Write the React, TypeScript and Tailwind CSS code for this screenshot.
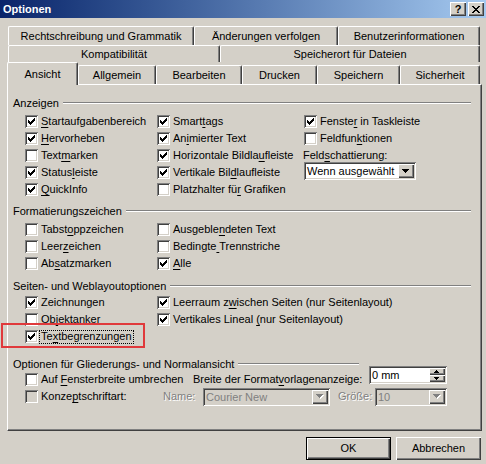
import React from "react";

const SUNKEN =
  "shadow-[inset_1px_1px_0_#808080,inset_-1px_-1px_0_#ffffff,inset_2px_2px_0_#404040,inset_-2px_-2px_0_#d4d0c8]";
const RAISED =
  "shadow-[inset_1px_1px_0_#ffffff,inset_-1px_-1px_0_#404040,inset_-2px_-2px_0_#808080]";
const DIS = "text-[#808080] [text-shadow:1px_1px_0_#ffffff]";

function M({ t }: { t: string }) {
  const i = t.indexOf("&");
  if (i < 0) return <>{t}</>;
  return (
    <>
      {t.slice(0, i)}
      <span className="underline decoration-1 underline-offset-[2px] whitespace-pre">{t[i + 1]}</span>
      {t.slice(i + 2)}
    </>
  );
}

const CHECK: number[][] = [
  [9, 3, 1],
  [8, 4, 2],
  [3, 5, 1],
  [7, 5, 3],
  [3, 6, 2],
  [6, 6, 3],
  [3, 7, 5],
  [4, 8, 3],
  [5, 9, 1],
];

function Box({ checked, disabled }: { checked?: boolean; disabled?: boolean }) {
  return (
    <div
      className={`relative w-[13px] h-[13px] shrink-0 ${disabled ? "bg-[#d4d0c8]" : "bg-white"} ${SUNKEN}`}
    >
      {checked && (
        <svg
          className="absolute left-0 top-0"
          width="13"
          height="13"
          viewBox="0 0 13 13"
          shapeRendering="crispEdges"
        >
          {CHECK.map(([x, y, w], i) => (
            <rect key={i} x={x} y={y} width={w} height={1} fill="#000" />
          ))}
        </svg>
      )}
    </div>
  );
}

function Chk({ l, c, d, f }: { l: string; c?: boolean; d?: boolean; f?: boolean }) {
  return (
    <div className="flex items-center h-[17px] whitespace-nowrap">
      <Box checked={c} disabled={d} />
      {f ? (
        <span className="ml-[1px] px-[1px] h-[14px] flex items-center border border-dotted border-black">
          <M t={l} />
        </span>
      ) : (
        <span className="ml-[3px]">
          <M t={l} />
        </span>
      )}
    </div>
  );
}

function GH({ t, mr }: { t: string; mr: string }) {
  return (
    <div className="flex items-center h-[16px] pl-[5px] whitespace-nowrap">
      <span>{t}</span>
      <div className={`flex-1 ml-[4px] h-[2px] border-t border-t-[#808080] border-b border-b-white ${mr}`} />
    </div>
  );
}

function Arrow({ up, disabled, small }: { up?: boolean; disabled?: boolean; small?: boolean }) {
  const rows = small ? [5, 3, 1] : [7, 5, 3, 1];
  const w = rows[0];
  const h = rows.length;
  const fill = disabled ? "#808080" : "#000";
  return (
    <svg width={w + 1} height={h + 1} viewBox={`0 0 ${w + 1} ${h + 1}`} shapeRendering="crispEdges">
      {rows.map((rw, i) => {
        const y = up ? h - 1 - i : i;
        const x = (w - rw) / 2;
        return (
          <g key={i}>
            {disabled && <rect x={x + 1} y={y + 1} width={rw} height={1} fill="#fff" />}
            <rect x={x} y={y} width={rw} height={1} fill={fill} />
          </g>
        );
      })}
    </svg>
  );
}

function Select({ w, text, disabled }: { w: string; text: string; disabled?: boolean }) {
  return (
    <div
      className={`${w} h-[18px] p-[2px] flex items-center ${SUNKEN} ${disabled ? "bg-[#d4d0c8]" : "bg-white"}`}
    >
      <span className={`flex-1 pl-[1px] truncate leading-[14px] ${disabled ? "text-[#808080]" : ""}`}>{text}</span>
      <div className={`w-[16px] h-[14px] bg-[#d4d0c8] ${RAISED} flex items-center justify-center`}>
        <Arrow disabled={disabled} />
      </div>
    </div>
  );
}

function Tab({ w, t, cls }: { w: string; t: string; cls?: string }) {
  return (
    <div
      className={`${w} ${cls ?? "h-full"} shrink-0 bg-[#d4d0c8] border-l border-t border-white border-r border-r-[#404040] shadow-[inset_-1px_0_0_#808080] rounded-tl-[2px] rounded-tr-[2px] flex items-center justify-center whitespace-nowrap leading-[14px]`}
    >
      {t}
    </div>
  );
}

const X_PIX: number[][] = [
  [0, 0, 2], [6, 0, 2],
  [1, 1, 2], [5, 1, 2],
  [2, 2, 4],
  [3, 3, 2],
  [2, 4, 4],
  [1, 5, 2], [5, 5, 2],
  [0, 6, 2], [6, 6, 2],
];

export default function App() {
  return (
    <div className="relative w-[486px] h-[464px] overflow-hidden bg-[#d4d0c8] text-[11px] leading-[17px] text-black font-['Liberation_Sans',Arial,sans-serif]">
      {/* Title bar */}
      <div className="h-[18px] flex items-center bg-linear-to-r from-[#0a246a] to-[#a6caf0] pl-[3px] pr-[2px]">
        <span className="text-white font-bold leading-[18px]">Optionen</span>
        <div className="ml-auto flex gap-[2px]">
          <div className={`w-[16px] h-[14px] bg-[#d4d0c8] ${RAISED} flex items-center justify-center font-bold text-[11px] leading-[14px]`}>
            ?
          </div>
          <div className={`w-[16px] h-[14px] bg-[#d4d0c8] ${RAISED} flex items-center justify-center`}>
            <svg width="8" height="7" viewBox="0 0 8 7" shapeRendering="crispEdges">
              {X_PIX.map(([x, y, w], i) => (
                <rect key={i} x={x} y={y} width={w} height={1} fill="#000" />
              ))}
            </svg>
          </div>
        </div>
      </div>

      {/* Tabs */}
      <div className="pt-[8px]">
        <div className="flex ml-[8px] h-[19px]">
          <Tab w="w-[186px]" t="Rechtschreibung und Grammatik" />
          <Tab w="w-[144px]" t="Änderungen verfolgen" />
          <Tab w="w-[142px]" t="Benutzerinformationen" />
        </div>
        <div className="flex ml-[8px] h-[17px]">
          <Tab w="w-[212px]" t="Kompatibilität" />
          <Tab w="w-[260px]" t="Speicherort für Dateien" />
        </div>
        <div className="flex ml-[7px] h-[22px] items-start">
          <Tab w="w-[71px]" t="Ansicht" cls="h-[23px] relative z-10" />
          <Tab w="w-[78px]" t="Allgemein" cls="h-[19px] mt-[3px]" />
          <Tab w="w-[86px]" t="Bearbeiten" cls="h-[19px] mt-[3px]" />
          <Tab w="w-[75px]" t="Drucken" cls="h-[19px] mt-[3px]" />
          <Tab w="w-[83px]" t="Speichern" cls="h-[19px] mt-[3px]" />
          <Tab w="w-[80px]" t="Sicherheit" cls="h-[19px] mt-[3px]" />
        </div>
      </div>

      {/* Panel */}
      <div className="ml-[7px] w-[475px] h-[347px] border-l border-t border-white border-r border-b border-r-[#404040] border-b-[#404040] shadow-[inset_-1px_-1px_0_#808080] flex flex-col">
        {/* Anzeigen */}
        <div className="mt-[10px]">
          <GH t="Anzeigen" mr="mr-[10px]" />
        </div>
        <div className="mt-[2px] grid grid-cols-[132px_147px_1fr] auto-rows-[17px] pl-[17px]">
          <Chk l="&Startaufgabenbereich" c />
          <Chk l="Smart&tags" c />
          <Chk l="Fenste&r in Taskleiste" c />

          <Chk l="&Hervorheben" c />
          <Chk l="An&imierter Text" c />
          <Chk l="Feldfun&ktionen" />

          <Chk l="Text&marken" />
          <Chk l="Horizontale Bildla&ufleiste" c />
          <div className="h-[17px] flex items-center -ml-[1px] whitespace-nowrap">
            <M t="Feld&schattierung:" />
          </div>

          <Chk l="Status&leiste" c />
          <Chk l="Vertikale Bil&dlaufleiste" c />
          <div className="-mt-[2px]">
            <Select w="w-[112px]" text="Wenn ausgewählt" />
          </div>

          <Chk l="&QuickInfo" c />
          <Chk l="Platzhalter fü&r Grafiken" />
          <div />
        </div>

        {/* Formatierungszeichen */}
        <div className="mt-[5px]">
          <GH t="Formatierungszeichen" mr="mr-[10px]" />
        </div>
        <div className="mt-[2px] grid grid-cols-[132px_147px_1fr] auto-rows-[17px] pl-[17px]">
          <Chk l="Tabst&oppzeichen" />
          <Chk l="Ausgeble&ndeten Text" />
          <div />
          <Chk l="Leer&zeichen" />
          <Chk l="Bedingte& Trennstriche" />
          <div />
          <Chk l="Ab&satzmarken" />
          <Chk l="&Alle" c />
          <div />
        </div>

        {/* Seiten- und Weblayoutoptionen */}
        <div className="mt-[6px]">
          <GH t="Seiten- und Weblayoutoptionen" mr="mr-[10px]" />
        </div>
        <div className="grid grid-cols-[132px_147px_1fr] auto-rows-[17px] pl-[17px]">
          <Chk l="Zeichnungen" c />
          <Chk l="Leerraum z&wischen Seiten (nur Seitenlayout)" c />
          <div />
          <Chk l="Ob&jektanker" />
          <Chk l="Vertikales Lineal &(nur Seitenlayout)" c />
          <div />
          <Chk l="Te&xtbegrenzungen" c f />
          <div />
          <div />
        </div>

        {/* Optionen für Gliederungs- und Normalansicht */}
        <div className="mt-[11px]">
          <GH t="Optionen für Gliederungs- und Normalansicht" mr="mr-[122px]" />
        </div>
        <div className="-mt-[1px] pl-[17px] flex flex-col">
          <div className="flex items-start h-[17px]">
            <div className="w-[168px]">
              <Chk l="Auf &Fensterbreite umbrechen" />
            </div>
            <div className="w-[176px] whitespace-nowrap">
              <M t="Breite der Format&vorlagenanzeige:" />
            </div>
            <div className={`-mt-[5px] w-[78px] h-[18px] bg-white p-[2px] flex items-center ${SUNKEN}`}>
              <span className="flex-1 pl-[1px] leading-[14px]">0 mm</span>
              <div className="flex flex-col w-[16px] h-[14px]">
                <div className={`h-[7px] bg-[#d4d0c8] ${RAISED} flex items-center justify-center`}>
                  <Arrow up small />
                </div>
                <div className={`h-[7px] bg-[#d4d0c8] ${RAISED} flex items-center justify-center`}>
                  <Arrow small />
                </div>
              </div>
            </div>
          </div>
          <div className="flex items-center h-[17px]">
            <div className="w-[138px]">
              <Chk l="Konze&ptschriftart:" d />
            </div>
            <div className={`w-[40px] whitespace-nowrap ${DIS}`}>Name:</div>
            <Select w="w-[127px]" text="Courier New" disabled />
            <div className={`w-[45px] pl-[8px] whitespace-nowrap ${DIS}`}>Größe:</div>
            <Select w="w-[72px]" text="10" disabled />
          </div>
        </div>
      </div>

      {/* Buttons */}
      <div className="flex justify-end gap-[5px] pr-[5px] mt-[6px]">
        <div className="w-[85px] h-[23px] border border-black">
          <div className={`h-full ${RAISED} flex items-center justify-center`}>OK</div>
        </div>
        <div className={`w-[85px] h-[23px] ${RAISED} flex items-center justify-center`}>Abbrechen</div>
      </div>

      {/* Red highlight */}
      <div className="absolute left-[1px] top-[323px] w-[144px] h-[25px] border-2 border-[#e0393b] pointer-events-none" />
    </div>
  );
}
